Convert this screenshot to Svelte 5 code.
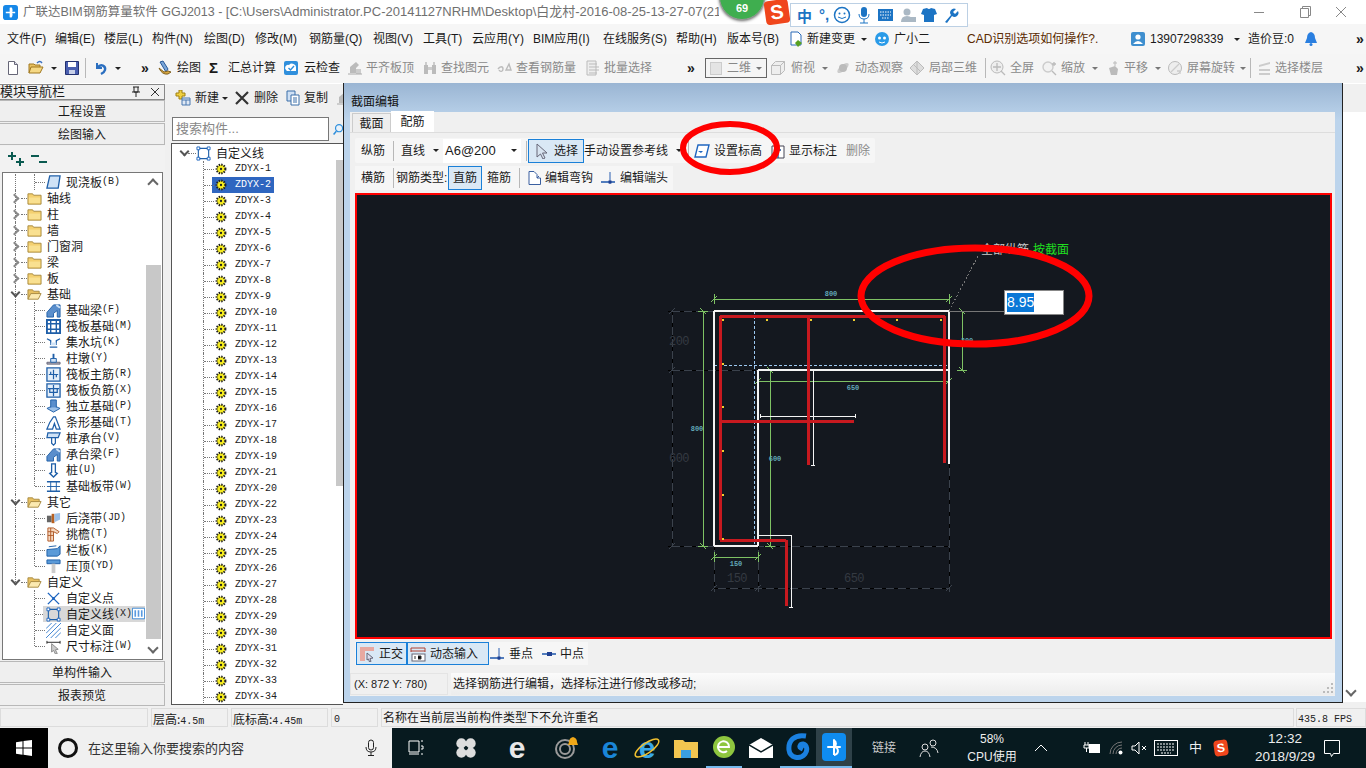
<script>
  const icons = {
    page: '<path d="M3.5 1.5h6l3 3v10h-9z" fill="#fff" stroke="#667"/><path d="M9.5 1.5v3h3" fill="#dde" stroke="#667"/>',
    open: '<path d="M1 13V4h5l1 1h5v2" fill="#e8c060" stroke="#a07820"/><path d="M1 13l2-6h12l-3 6z" fill="#f5d884" stroke="#a07820"/><path d="M9 3q3-3 5 0" fill="none" stroke="#3a70c0" stroke-width="1.4"/>',
    save: '<path d="M1.5 1.5h13v13h-13z" fill="#4a5fb0" stroke="#223070"/><path d="M4 2h8v5H4z" fill="#fff"/><path d="M5 10h6v4H5z" fill="#c8d0e8"/>',
    undo: '<path d="M4 3v5h5" fill="none" stroke="#2b6fc0" stroke-width="2"/><path d="M4.5 7.5C8 3 13 6 12 10c-.5 2-2 3-4 4" fill="none" stroke="#2b6fc0" stroke-width="2.4"/>',
    draw: '<path d="M3 2l3-1 5 8-2 3z" fill="#7aa6d8" stroke="#2a5a98"/><path d="M2 8q3 7 9 6l3-2-3-1-4 1z" fill="#d8a840" stroke="#806020"/>',
    cloud: '<rect x="1" y="1" width="14" height="14" rx="2" fill="#2f8fdc"/><path d="M3 10a3 3 0 0 1 3-5 4 4 0 0 1 7 3v3H4z" fill="#fff"/><path d="M5.500 8l2 2 3.500-4" fill="none" stroke="#2f8fdc" stroke-width="1.4"/>',
    flat: '<path d="M3 13V7l6-5 3 3-3 3v5z" fill="#bbb"/><path d="M9 9h5v5H9z" fill="#ccc"/><path d="M1 14h14" stroke="#aaa"/>',
    binoc: '<path d="M2 5h4v9H2zM10 5h4v9h-4z" fill="#bbb"/><path d="M6 7h4v3H6zM3 2h2v3H3zM11 2h2v3h-2z" fill="#ccc"/>',
    rebar: '<path d="M1 9c2-3 5-3 5 0s-3 3-4 1M9 10l3-6 2 6z" fill="none" stroke="#bbb" stroke-width="1.4"/>',
    batch: '<path d="M2 1h9v14H2z" fill="#eee" stroke="#bbb"/><path d="M4 4h8M4 7h10M4 10h10M4 13h8" stroke="#bbb"/>',
    cube: '<path d="M1.500 5.500h9v9h-9zM1.500 5.500l4-4h9v9l-4 4M10.500 5.500l4-4" fill="#eee" stroke="#bbb"/>',
    orbit: '<ellipse cx="8" cy="8" rx="7" ry="3" transform="rotate(-40 8 8)" fill="#ccc"/><circle cx="8" cy="8" r="4" fill="#bbb"/>',
    local: '<path d="M8 1l7 7-7 7-7-7z" fill="#ddd" stroke="#bbb"/><path d="M4 4l8 8M8 1v14" stroke="#bbb"/>',
    full: '<circle cx="7" cy="7" r="6" fill="#eee" stroke="#bbb"/><path d="M7 3v8M3 7h8M11 11l4 4" stroke="#bbb" stroke-width="1.300"/>',
    zoom: '<circle cx="6" cy="7" r="5" fill="#f2f2f2" stroke="#ccc" stroke-width="1.400"/><path d="M10 11l4 4M12 2v4M10 4h4" stroke="#bbb" stroke-width="1.300"/>',
    pan: '<path d="M4 8l6-2 3 3-1 6H6z" fill="#bbb"/><path d="M10 1v5M8 3h4" stroke="#bbb"/>',
    rotate: '<circle cx="8" cy="8" r="6.500" fill="#eee" stroke="#bbb"/><path d="M4 12l8-8M10 11h3v3" stroke="#ccc" stroke-width="1.300" fill="none"/>',
    floors: '<path d="M2 5l11-3v2L2 7zM2 9h11v2H2zM2 13h11v2H2z" fill="#ccc"/>',
    change: '<path d="M3 1h7l3 3v10H3z" fill="#fff" stroke="#2a6ab8"/><path d="M10 9l4 3-4 4-3-4z" fill="#58a020"/>',
    xiao: '<ellipse cx="8" cy="8" rx="7" ry="7" fill="#2a9be8"/><circle cx="5.500" cy="7" r="1.500" fill="#fff"/><circle cx="10.500" cy="7" r="1.500" fill="#fff"/><path d="M5 11q3 2 6 0" stroke="#fff" fill="none"/>',
    user: '<rect x="1" y="1" width="14" height="14" rx="2" fill="#3f8fcf"/><circle cx="8" cy="6" r="2.600" fill="#fff"/><path d="M3 13q5-6 10 0z" fill="#fff"/>',
    bell: '<path d="M8 1q-4 1-4 6l-2 5h12l-2-5q0-5-4-6z" fill="#2a7fe0"/><circle cx="8" cy="13.500" r="1.500" fill="#2a7fe0"/>',
    plus: '<path d="M8 2h3v3h3v3h-3v3H8V8H5V5h3z" fill="#f0d040" stroke="#a08010" transform="translate(-4 -2)"/><path d="M7 8h8v7H7z" fill="#dfe8f4" stroke="#4a78b0"/><path d="M7 10h8M11 10v5" stroke="#4a78b0"/>',
    xmark: '<path d="M2 2l12 12M14 2L2 14" stroke="#333" stroke-width="2.200"/>',
    copy: '<path d="M2 1h8v10H2z" fill="#cfe0f4" stroke="#3a6ea8"/><path d="M6 5h8v10H6z" fill="#fff" stroke="#3a6ea8"/><path d="M8 8h4M8 10h4M8 12h4" stroke="#3a6ea8"/>',
    cursor: '<path d="M3 1l10 9H8.500l2.500 5-2 1-2.500-5L3 14z" fill="#d8e4f0" stroke="#667"/>',
    elev: '<path d="M4 2h11l-3 12H1z" fill="#fff" stroke="#1f66c0" stroke-width="1.400"/><path d="M4 8h5l-2 2z" fill="#1f66c0"/>',
    show: '<path d="M2 3h12v12H2z" fill="#fff" stroke="#445"/><path d="M8 1v14M5 7h6" stroke="#1f4f98" stroke-width="1.400"/>',
    hook: '<path d="M3 1.500h5l3 3V8h3.500v6.500H3z" fill="#fff" stroke="#3a5fa0"/><path d="M11 8l2-2" stroke="#3a5fa0"/>',
    end: '<path d="M1 12h14" stroke="#2a5fb0" stroke-width="1.600"/><path d="M10 2v12" stroke="#2a5fb0"/><rect x="8.500" y="10.500" width="3" height="3" fill="#1f3f90"/>',
    mid: '<path d="M1 8h14" stroke="#2a5fb0" stroke-width="1.600"/><rect x="6" y="6" width="5" height="4" fill="#1f3f90"/>',
    ortho: '<path d="M1 1h14v4H6v10H1z" fill="#e8a8a0"/><path d="M8 7l6 5-3 .5 1 3-1.500.5-1-3L8 14z" fill="#dde" stroke="#667"/>',
    dyn: '<path d="M1 2h14M1 5h14M1 2v4M15 2v4" stroke="#b04030"/><rect x="2" y="8" width="13" height="7" fill="#fff" stroke="#667"/><path d="M5 10v3M8 10h3v3H8" stroke="#333"/>',
    folder: '<path d="M1 3h5l1 1.500h8V14H1z" fill="#f4d070" stroke="#a88a40"/><path d="M2 7h12v6H2z" fill="#f9e090"/>',
    folderOpen: '<path d="M1 13V3h5l1 1.500h6V7" fill="#e8c060" stroke="#a88a40"/><path d="M1 13l3-6h11l-3 6z" fill="#fbe9b0" stroke="#a88a40"/>',
    slab: '<path d="M4 1h11l-2 13H1z" fill="#cfe2f6" stroke="#1f5fa8" stroke-width="1.400"/>',
    beam: '<path d="M1 15V10l7-8h7v13h-3V8L8 11v4z" fill="#5a8ecc" stroke="#1f5fa8"/><path d="M11 2l4 3" stroke="#cfe2f6" stroke-width="2"/>',
    raft: '<path d="M1 1h14v14H1z" fill="#fff" stroke="#1f5fa8" stroke-width="2"/><path d="M5 1v14M11 1v14M1 5h14M1 11h14" stroke="#1f5fa8" stroke-width="1.500"/>',
    pit: '<path d="M1 4l4 2v4h6V6l4-2M4 13h8" fill="none" stroke="#1f5fa8" stroke-width="1.400"/><path d="M5 8h6v3H5z" fill="#cfe2f6"/>',
    pier: '<path d="M1 12h14v2H1z" fill="#aab" stroke="#667"/><path d="M5 8h6v4H5z" fill="#cfe2f6" stroke="#1f5fa8"/><path d="M7 3h2v5H7z" fill="#1f5fa8"/>',
    rmain: '<path d="M1 1h14v14H1z" fill="#e4effa" stroke="#1f5fa8" stroke-width="1.400"/><path d="M8 3v10M3 8h10M5 5v3M11 8v3" stroke="#1f5fa8" stroke-width="1.300"/>',
    rneg: '<path d="M1 1h14v14H1z" fill="#e4effa" stroke="#1f5fa8" stroke-width="1.400"/><path d="M8 2v12M2 6h12M4 6v4h8V6" fill="none" stroke="#1f5fa8" stroke-width="1.300"/>',
    iso: '<path d="M1 10l7-3 7 3-7 4z" fill="#9cc0e8" stroke="#1f5fa8"/><path d="M5 9V1h6v8" fill="#5a8ecc" stroke="#1f5fa8"/>',
    strip: '<path d="M1 15l3-7 4-6h2l5 13h-4l-2-6-2 6z" fill="#fff" stroke="#1f5fa8" stroke-width="1.300"/>',
    cap: '<path d="M2 2h13l-2 5H1z" fill="#cfe2f6" stroke="#1f5fa8" stroke-width="1.300"/><path d="M6 7h4v6l-2 2-2-2z" fill="#fff" stroke="#1f5fa8" stroke-width="1.300"/>',
    pile: '<path d="M6 1h4v9l2 1-4 4-4-4 2-1z" fill="#fff" stroke="#1f5fa8" stroke-width="1.400"/>',
    band: '<path d="M1 3h14M1 13h14" stroke="#1f5fa8" stroke-width="1.600"/><path d="M5 3v10M11 3v10M1 8h14" stroke="#1f5fa8"/>',
    post: '<path d="M1 5h5v7H1z" fill="#666"/><path d="M6 3h3v10H6z" fill="#b86020"/><path d="M9 3l6-1v7l-6 3z" fill="#9cc0e8"/>',
    eave: '<path d="M2 1h6l6 4-2 2-4-2v10H2z" fill="#f6d8c0" stroke="#b05a28"/><path d="M2 5h6M2 9h6M5 1v14" stroke="#b05a28"/>',
    rail: '<path d="M1 7l11-1 3-3v9l-3 2H1z" fill="#5a9ad8" stroke="#1f5fa8"/><path d="M3 4l8-1" stroke="#1f5fa8"/>',
    top: '<path d="M1 1h14v4H1z" fill="#5a9ad8" stroke="#1f5fa8"/><path d="M6 5h4v10H6z" fill="#ccc"/>',
    point: '<path d="M2 2l12 12M14 2L2 14" stroke="#1f66c0" stroke-width="1.500"/><circle cx="8" cy="8" r="1.500" fill="#1f66c0"/>',
    line: '<path d="M2.500 2.500h11v11h-11z" fill="none" stroke="#1f5fa8" stroke-width="1.200"/><path d="M1 1h3v3H1zM12 1h3v3h-3zM1 12h3v3H1zM12 12h3v3h-3z" fill="#fff" stroke="#1f66c0"/>',
    hatch: '<path d="M0 6l6-6M0 11L11 0M0 16L16 0M5 16L16 5M10 16l6-6" stroke="#3a80d0"/>',
    dim: '<path d="M1 2v3M15 2v3M1 3.500h14" stroke="#222"/><path d="M6 5l7 6-3 .5 2 4-2 .5-2-4-2 2z" fill="#ccc" stroke="#888"/>',
    cols: '<path d="M.5 1.500h15v13H.5z" fill="#fff" stroke="#1f78d0"/><path d="M3 4h2v8H3zM7 4h2v8H7zM11 4h2v8h-2z" fill="#5a9ae0"/>',
    gear: '<circle cx="8" cy="8" r="5" fill="#f8ee20" stroke="#222" stroke-width="2.400" stroke-dasharray="1.600 1.300"/><circle cx="8" cy="8" r="1.300" fill="#222"/>'
  };

  const place = (items) =>
    items.map((it, i) => ({ ...it, w: items[i + 1] ? items[i + 1].x - it.x : null }));

  const menus = place([
    { x: 7, t: "文件(F)" }, { x: 55, t: "编辑(E)" }, { x: 104, t: "楼层(L)" }, { x: 152, t: "构件(N)" },
    { x: 204, t: "绘图(D)" }, { x: 255, t: "修改(M)" }, { x: 309, t: "钢筋量(Q)" }, { x: 373, t: "视图(V)" },
    { x: 423, t: "工具(T)" }, { x: 472, t: "云应用(Y)" }, { x: 533, t: "BIM应用(I)" }, { x: 603, t: "在线服务(S)" },
    { x: 676, t: "帮助(H)" }, { x: 727, t: "版本号(B)" }, { x: 788, ic: "change" }, { x: 807, t: "新建变更" },
    { x: 861, a: 1 }, { x: 874, ic: "xiao" }, { x: 894, t: "广小二" }, { x: 967, t: "CAD识别选项如何操作?.", brown: 1 },
    { x: 1130, ic: "user" }, { x: 1150, t: "13907298339" }, { x: 1234, a: 1 }, { x: 1248, t: "造价豆:0" },
    { x: 1303, ic: "bell" }, { x: 1356, t: "»" }
  ]);

  const tools = place([
    { x: 5, ic: "page" }, { x: 28, ic: "open" }, { x: 51, a: 1 }, { x: 64, ic: "save" }, { x: 85, s: 1 },
    { x: 93, ic: "undo" }, { x: 115, a: 1 }, { x: 141, t: "»" }, { x: 157, ic: "draw" }, { x: 177, t: "绘图" },
    { x: 209, t: "Σ", b: 1 }, { x: 228, t: "汇总计算" }, { x: 283, ic: "cloud" }, { x: 304, t: "云检查" },
    { x: 347, ic: "flat" }, { x: 366, t: "平齐板顶", g: 1 }, { x: 422, ic: "binoc" }, { x: 441, t: "查找图元", g: 1 },
    { x: 497, ic: "rebar" }, { x: 516, t: "查看钢筋量", g: 1 }, { x: 585, ic: "batch" }, { x: 604, t: "批量选择", g: 1 },
    { x: 687, t: "»" }, { x: 705, combo: 1 }, { x: 770, ic: "cube" }, { x: 791, t: "俯视", g: 1 }, { x: 822, a: 1, ga: 1 },
    { x: 835, ic: "orbit" }, { x: 855, t: "动态观察", g: 1 }, { x: 909, ic: "local" }, { x: 929, t: "局部三维", g: 1 },
    { x: 985, s: 1 }, { x: 990, ic: "full" }, { x: 1010, t: "全屏", g: 1 }, { x: 1042, ic: "zoom" }, { x: 1061, t: "缩放", g: 1 },
    { x: 1092, a: 1, ga: 1 }, { x: 1105, ic: "pan" }, { x: 1124, t: "平移", g: 1 }, { x: 1155, a: 1, ga: 1 },
    { x: 1167, ic: "rotate" }, { x: 1187, t: "屏幕旋转", g: 1 }, { x: 1240, a: 1, ga: 1 }, { x: 1250, s: 1 },
    { x: 1257, ic: "floors" }, { x: 1275, t: "选择楼层", g: 1 }, { x: 1356, t: "»" }
  ]);

  const midTools = place([
    { x: 175, ic: "plus" }, { x: 195, t: "新建" }, { x: 222, a: 1 }, { x: 234, ic: "xmark" }, { x: 254, t: "删除" },
    { x: 285, ic: "copy" }, { x: 304, t: "复制" }, { x: 336, ic: "flat" }
  ]);

  const row1 = place([
    { x: 361, t: "纵筋" }, { x: 393, s: 1 }, { x: 401, t: "直线" }, { x: 433, a: 1 }, { x: 443, select: 1 },
    { x: 526, s: 1 }, { x: 528, ic: "cursor", t: "选择", on: 1 }, { x: 584, t: "手动设置参考线" }, { x: 676, a: 1 },
    { x: 688, s: 1 }, { x: 694, ic: "elev" }, { x: 714, t: "设置标高" }, { x: 770, ic: "show" }, { x: 789, t: "显示标注" },
    { x: 846, t: "删除", g: 1 }
  ]);

  const row2 = place([
    { x: 361, t: "横筋" }, { x: 393, s: 1 }, { x: 396, t: "钢筋类型:" }, { x: 448, t: "直筋", on: 1 }, { x: 487, t: "箍筋" },
    { x: 519, s: 1 }, { x: 526, ic: "hook" }, { x: 545, t: "编辑弯钩" }, { x: 600, ic: "end" }, { x: 620, t: "编辑端头" }
  ]);

  const row3 = place([
    { x: 356, ic: "ortho", t: "正交", on: 1 }, { x: 407, ic: "dyn", t: "动态输入", on: 1 }, { x: 489, ic: "end" }, { x: 509, t: "垂点" },
    { x: 541, ic: "mid" }, { x: 560, t: "中点" }
  ]);

  const modules = [
    { n: "现浇板", k: "(B)", ic: "slab", lv: 1 },
    { n: "轴线", ic: "folder", arrow: "r" }, { n: "柱", ic: "folder", arrow: "r" }, { n: "墙", ic: "folder", arrow: "r" },
    { n: "门窗洞", ic: "folder", arrow: "r" }, { n: "梁", ic: "folder", arrow: "r" }, { n: "板", ic: "folder", arrow: "r" },
    { n: "基础", ic: "folderOpen", arrow: "d" },
    { n: "基础梁", k: "(F)", ic: "beam", lv: 1 }, { n: "筏板基础", k: "(M)", ic: "raft", lv: 1 }, { n: "集水坑", k: "(K)", ic: "pit", lv: 1 },
    { n: "柱墩", k: "(Y)", ic: "pier", lv: 1 }, { n: "筏板主筋", k: "(R)", ic: "rmain", lv: 1 }, { n: "筏板负筋", k: "(X)", ic: "rneg", lv: 1 },
    { n: "独立基础", k: "(P)", ic: "iso", lv: 1 }, { n: "条形基础", k: "(T)", ic: "strip", lv: 1 }, { n: "桩承台", k: "(V)", ic: "cap", lv: 1 },
    { n: "承台梁", k: "(F)", ic: "beam", lv: 1 }, { n: "桩", k: "(U)", ic: "pile", lv: 1 }, { n: "基础板带", k: "(W)", ic: "band", lv: 1, last: 1 },
    { n: "其它", ic: "folderOpen", arrow: "d" },
    { n: "后浇带", k: "(JD)", ic: "post", lv: 1 }, { n: "挑檐", k: "(T)", ic: "eave", lv: 1 }, { n: "栏板", k: "(K)", ic: "rail", lv: 1 },
    { n: "压顶", k: "(YD)", ic: "top", lv: 1, last: 1 },
    { n: "自定义", ic: "folderOpen", arrow: "d", end: 1 },
    { n: "自定义点", ic: "point", lv: 1, nov: 1 }, { n: "自定义线", k: "(X)", ic: "line", lv: 1, nov: 1, on: 1 }, { n: "自定义面", ic: "hatch", lv: 1, nov: 1 },
    { n: "尺寸标注", k: "(W)", ic: "dim", lv: 1, nov: 1, last: 1 }
  ];

  const order = [1,2,3,4,5,6,7,8,9,10,11,12,13,14,15,16,17,18,19,21,20,22,23,24,25,26,27,28,29,30,31,32,33,34];

  const white = [[714,311,949,311,2],[714,311,714,546,2],[714,546,758,546,2],[758,370,758,546,2],[758,370,949,370,2],[949,311,949,464,2],
    [813,370,813,465,1],[760,416,855,416,1],[758,535,791,535,1],[791,535,791,607,1],[811,465,815,465,1],[789,607,793,607,1],[760,414,760,418,1],[855,414,855,418,1]];
  const red = [[720,316,945,316],[720,316,720,540],[808,316,808,465],[944,316,944,463],[720,421,854,421],[720,540,786,540],[786,540,786,606]];
  const tick = (x, y) => [x - 3, y + 3, x + 3, y - 3];
  const green = [[714,299,949,299],[962,311,962,370],[758,381,949,381],[703,311,703,546],[770,370,770,546],[714,557,758,557],
    [714,294,714,304],[949,294,949,304],[758,376,758,386],[949,376,949,386],[957,311,967,311],[957,370,967,370],[698,311,708,311],[698,546,708,546],[765,370,775,370],[765,546,775,546],[714,552,714,562],[758,552,758,562],
    tick(714,299),tick(949,299),tick(758,381),tick(949,381),tick(714,557),tick(758,557),[959,308,965,314],[959,367,965,373],[700,308,706,314],[700,543,706,549],[767,367,773,373],[767,543,773,549]];
  const grey = [[672,311,672,546],[668,311,714,311],[668,370,758,370],[668,546,949,546],[714,546,714,592],[758,546,758,592],[949,464,949,592],[714,588,949,588]];
  const greyTicks = [tick(672,311),tick(672,370),tick(672,546),tick(714,588),tick(758,588),tick(949,588)];
  const dots = [[722,319],[766,319],[810,319],[853,319],[896,319],[940,319],[722,363],[722,406],[722,450],[722,494],[722,538]];
  const big = [["200",679,345],["600",679,462],["150",737,582],["650",854,582]];
  const small = [["800",831,296],["650",853,390],["800",697,431],["600",775,461],["150",736,566],["200",967,343]];
</script>

{#snippet ic(name, size = 16)}
  <svg class="ic" width={size} height={size} viewBox="0 0 16 16">{@html icons[name]}</svg>
{/snippet}

{#snippet items(list)}
  {#each list as it}
    <div class="it" class:gray={it.g} class:brown={it.brown} class:bold={it.b} class:dbl={it.t === "»"} class:on={it.on} style:width={it.w ? it.w + "px" : null}>
      {#if it.s}<span class="sep"></span>{/if}
      {#if it.a}<span class="caret" class:dim={it.ga}></span>{/if}
      {#if it.combo}<span class="combo"><i></i><em>二维</em><span class="caret dim"></span></span>{/if}
      {#if it.select}<span class="select">A6@200<span class="caret"></span></span>{/if}
      {#if it.ic}{@render ic(it.ic)}{/if}
      {#if it.t}<span class="lb">{it.t}</span>{/if}
    </div>
  {/each}
{/snippet}

<div class="app">
  <header class="title">
    <svg class="logo" width="15" height="15" viewBox="0 0 16 16"><rect width="16" height="16" rx="3" fill="#1688e8"/><path d="M8 3v10M3 8h10M8 8a3 3 0 0 0 0-5M8 8a3 3 0 0 1 0 5" fill="none" stroke="#fff" stroke-width="1.800"/></svg>
    <span class="ttl">广联达BIM钢筋算量软件 GGJ2013 - <span class="path">[C:\Users\Administrator.PC-20141127NRHM\Desktop\白龙村-2016-08-25-13-27-07(2163版).GGJ12]</span></span>
    <div class="winbtns">
      <svg width="92" height="14" viewBox="0 0 92 14"><path d="M0 7.500h10" stroke="#888"/><path d="M46.500 3.500h8v9h-8zM48.500 3.500v-2h8v9h-2" fill="none" stroke="#888"/><path d="M92 2L82 12M82 2l10 10" stroke="#888"/></svg>
    </div>
  </header>

  <nav class="menu bar">{@render items(menus)}</nav>
  <div class="tools bar">{@render items(tools)}</div>

  <main class="main">
    <aside class="left">
      <div class="phead"><span>模块导航栏</span>
        <svg width="30" height="12" viewBox="0 0 30 12"><path d="M2 1h6M3 1v5h4V1M1 6h8M5 6v5" fill="none" stroke="#222"/><path d="M20 2l8 8M28 2l-8 8" stroke="#333"/></svg>
      </div>
      <div class="nbtn">工程设置</div>
      <div class="nbtn">绘图输入</div>
      <div class="expand">
        <svg width="46" height="18" viewBox="0 0 46 18"><path d="M3 5h8M7 1v8M11 11h8M15 7v8" stroke="#0a5a50" stroke-width="2"/><path d="M26 5h8M34 11h8" stroke="#0a5a50" stroke-width="2"/></svg>
      </div>
      <div class="tree mod">
        <div class="scroll"><b class="chev top"></b><i class="thumb"></i><b class="chev"></b></div>
        {#each modules as m}
          <div class="row" class:lv={m.lv}>
            {#if !m.end && !m.nov}<i class="v0"></i>{/if}
            {#if m.end}<i class="v0 half"></i>{/if}
            {#if m.lv}<i class="v1" class:half={m.last}></i><i class="h1"></i>{:else}<i class="h0"></i>{/if}
            {#if m.arrow}<b class="tw {m.arrow}"></b>{/if}
            <span class="cell" class:sel={m.on}>
              {@render ic(m.ic, 15)}
              <span class="cn">{m.n}</span>{#if m.k}<span class="mono">{m.k}</span>{/if}
              {#if m.on}<svg class="cols" width="13" height="15" viewBox="0 0 16 16">{@html icons.cols}</svg>{/if}
            </span>
          </div>
        {/each}
      </div>
      <div class="nbtn foot">单构件输入</div>
      <div class="nbtn">报表预览</div>
    </aside>

    <section class="mid">
      <div class="midbar">{@render items(midTools)}</div>
      <div class="srow">
        <div class="search">搜索构件...</div>
        <svg width="14" height="16" viewBox="0 0 14 16"><circle cx="9" cy="7" r="4.500" fill="#e8f2fb" stroke="#2f8fdc" stroke-width="1.500"/><path d="M5.500 11L2 15" stroke="#2f8fdc" stroke-width="2"/></svg>
      </div>
      <div class="tree comp">
        <div class="mscroll"><i></i></div>
        <div class="row root"><b class="tw d"></b><i class="h0"></i>{@render ic("line", 15)}<span class="cn">自定义线</span></div>
        {#each order as n}
          <div class="row child" class:cur={n === 2}><i class="v1"></i><i class="h1"></i>{@render ic("gear", 14)}<span class="mono">ZDYX-{n}</span></div>
        {/each}
      </div>
    </section>

    <section class="dialog">
      <div class="dtitle">截面编辑</div>
      <div class="dbody">
        <div class="tabs"><span class="tab">截面</span><span class="tab act">配筋</span></div>
        <div class="drow r1 bar">{@render items(row1)}</div>
        <div class="drow r2 bar">{@render items(row2)}</div>
        <div class="canvas">
          <svg width="973" height="442" viewBox="357 195 973 442" shape-rendering="crispEdges">
            {#each grey as l}<line x1={l[0]} y1={l[1]} x2={l[2]} y2={l[3]} stroke="#3b424c"/><line x1={l[0]} y1={l[1]} x2={l[2]} y2={l[3]} stroke="#000" stroke-dasharray="4 8"/>{/each}
            {#each greyTicks as l}<line x1={l[0]} y1={l[1]} x2={l[2]} y2={l[3]} stroke="#3b424c"/>{/each}
            {#each big as b}<text x={b[1]} y={b[2]} class="bigt" text-anchor="middle">{b[0]}</text>{/each}
            <line x1="754" y1="311" x2="754" y2="546" stroke="#9cc8f0" stroke-dasharray="3 2"/>
            <line x1="714" y1="365" x2="949" y2="365" stroke="#9cc8f0" stroke-dasharray="3 2"/>
            {#each green as l}<line x1={l[0]} y1={l[1]} x2={l[2]} y2={l[3]} stroke="#7ec264"/>{/each}
            {#each white as l}<line x1={l[0]} y1={l[1]} x2={l[2]} y2={l[3]} stroke="#f4f4f4" stroke-width={l[4]}/>{/each}
            {#each red as l}<line x1={l[0]} y1={l[1]} x2={l[2]} y2={l[3]} stroke="#c8191f" stroke-width="3"/>{/each}
            {#each dots as d}<rect x={d[0]} y={d[1]} width="2" height="2" fill="#f0d030"/>{/each}
            {#each small as s}<text x={s[1]} y={s[2]} class="smt" text-anchor="middle">{s[0]}</text>{/each}
            <path d="M949 311L979 254" stroke="#777" stroke-dasharray="2 2" fill="none"/>
            <line x1="949" y1="311" x2="1004" y2="311" stroke="#777"/>
            <text x="981" y="254" class="note" fill="#ccc">全部纵筋</text>
            <text x="1033" y="254" class="note" fill="#20e020">按截面</text>
          </svg>
          <div class="input"><span>8.95</span></div>
        </div>
        <div class="drow r3 bar">{@render items(row3)}</div>
        <div class="dstat">
          <span class="xy">(X: 872 Y: 780)</span>
          <span class="hint">选择钢筋进行编辑，选择标注进行修改或移动;
            <svg class="grip" width="10" height="10" viewBox="0 0 10 10"><path d="M8 0h2v2H8zM4 4h2v2H4zM8 4h2v2H8zM0 8h2v2H0zM4 8h2v2H4zM8 8h2v2H8z" fill="#bbb"/></svg>
          </span>
        </div>
      </div>
    </section>

    <aside class="far"><b class="chev"></b></aside>
  </main>

  <footer class="status">
    <span class="c a"></span>
    <span class="c b"><span class="cn">层高:</span><span class="mono">4.5m</span></span>
    <span class="c d"><span class="cn">底标高:</span><span class="mono">4.45m</span></span>
    <span class="c e"><span class="mono">0</span></span>
    <span class="c f">名称在当前层当前构件类型下不允许重名</span>
    <span class="c g"><span class="mono">435.8 FPS</span></span>
  </footer>

  <div class="taskbar">
    <div class="start"><svg width="16" height="16" viewBox="0 0 16 16"><path d="M0 2.200l6.500-1v6.300H0zM7.500 1L16 0v7.500H7.500zM0 8.500h6.500v6.300l-6.500-1zM7.500 8.500H16V16l-8.500-1.200z" fill="#fff"/></svg></div>
    <div class="tsearch">
      <span class="ring"></span><span class="ph">在这里输入你要搜索的内容</span>
      <svg width="12" height="18" viewBox="0 0 12 18"><rect x="3.500" y="1" width="5" height="10" rx="2.500" fill="none" stroke="#222"/><path d="M1 8q0 5 5 5t5-5M6 13v3M3 16.500h6" fill="none" stroke="#222"/></svg>
    </div>
    <div class="tasks">
      <span class="tk" style:width="48px"><svg width="16" height="16" viewBox="0 0 16 16"><path d="M1 1h10v11H1zM13 1h2M13 6h2v3h-2M13 14h2M1 14h10" fill="none" stroke="#fff"/></svg></span>
      <span class="tk" style:width="52px"><svg width="24" height="24" viewBox="0 0 26 26"><circle cx="8" cy="8" r="5.500" fill="#ddd"/><circle cx="18" cy="8" r="5.500" fill="#ddd"/><circle cx="8" cy="18" r="5.500" fill="#ddd"/><circle cx="18" cy="18" r="5.500" fill="#ddd"/><circle cx="13" cy="13" r="2" fill="#061a1f"/></svg></span>
      <span class="tk" style:width="50px"><span class="ee" style:color="#e8e8e8">e</span></span>
      <span class="tk" style:width="50px"><svg width="28" height="28" viewBox="0 0 28 28"><circle cx="12" cy="15" r="9" fill="none" stroke="#9a9a9a" stroke-width="2"/><circle cx="12" cy="15" r="5" fill="none" stroke="#9a9a9a" stroke-width="2"/><path d="M20 3q-4 1-4 5l-1 3h10l-1-3q0-4-4-5z" fill="#f0a818"/></svg></span>
      <span class="tk" style:width="36px"><span class="ee" style:color="#1a86d8">e</span></span>
      <span class="tk ie" style:width="38px"><span class="ee" style:color="#39a8e8">e</span><svg width="30" height="30" viewBox="0 0 30 30"><ellipse cx="15" cy="15" rx="14" ry="5" transform="rotate(-35 15 15)" fill="none" stroke="#f0c030" stroke-width="1.500"/></svg></span>
      <span class="tk" style:width="40px"><svg width="26" height="22" viewBox="0 0 26 22"><path d="M1 3h9l2 2h13v16H1z" fill="#f2c650"/><path d="M8 13h10v8H8z" fill="#3a9fe0"/></svg></span>
      <span class="tk under" style:width="36px"><svg width="24" height="26" viewBox="0 0 24 26"><circle cx="12" cy="13" r="11" fill="#8ec63f"/><path d="M6 13h11a5.500 5.500 0 1 0-2 4" fill="none" stroke="#fff" stroke-width="2"/></svg></span>
      <span class="tk" style:width="38px"><svg width="24" height="20" viewBox="0 0 24 20"><path d="M0 7L12 0l12 7v13H0z" fill="#fff"/><path d="M0 7l12 7 12-7" fill="none" stroke="#061a1f" stroke-width="1.500"/></svg></span>
      <span class="tk under" style:width="36px"><svg width="24" height="28" viewBox="0 0 24 28"><path d="M20 3C8 1 2 8 3 17c1 8 11 10 16 4 3-4 2-9-2-10-3 0-4 3-2 4l2 1" fill="none" stroke="#1a80e0" stroke-width="5"/></svg></span>
      <span class="tk under active" style:width="36px"><span class="tile"><svg width="18" height="18" viewBox="0 0 16 16"><path d="M8 1v14M2 8h12M8 8a3.500 3.500 0 0 0 0-6M8 8a3.500 3.500 0 0 1 0 7" fill="none" stroke="#fff" stroke-width="1.800"/></svg></span></span>
      <span class="tl link">链接</span>
      <svg class="ppl" width="22" height="20" viewBox="0 0 22 20"><circle cx="7" cy="9" r="3" fill="none" stroke="#ddd"/><path d="M2 19q1-6 5-6t5 6" fill="none" stroke="#ddd"/><circle cx="15" cy="5" r="3" fill="none" stroke="#ddd"/><path d="M13 9q6 0 7 6" fill="none" stroke="#ddd"/></svg>
    </div>
    <div class="cpu"><span>58%</span><span>CPU使用</span></div>
    <svg class="up" width="14" height="8" viewBox="0 0 14 8"><path d="M1 7l6-6 6 6" fill="none" stroke="#fff"/></svg>
    <div class="tray">
      <svg width="18" height="14" viewBox="0 0 18 14"><path d="M2 1v3M5 1v3M1 4h5v3H1zM3.500 7v4" stroke="#fff" fill="none"/><rect x="6" y="3" width="11" height="9" fill="#fff"/></svg>
      <svg width="16" height="16" viewBox="0 0 16 16"><path d="M2 14a12 12 0 0 1 12-12M5 14a9 9 0 0 1 9-9M8 14a6 6 0 0 1 6-6" fill="none" stroke="#777"/><circle cx="12.500" cy="12.500" r="2" fill="#fff"/></svg>
      <svg width="16" height="14" viewBox="0 0 16 14"><path d="M1 5h3l4-4v12L4 9H1z" fill="none" stroke="#fff"/><path d="M11 5l4 4M15 5l-4 4" stroke="#fff"/></svg>
      <svg width="24" height="16" viewBox="0 0 24 16"><rect x=".5" y=".5" width="23" height="15" fill="none" stroke="#fff"/><path d="M3 4h18M3 7h18M3 10h18M7 13h10" stroke="#fff" stroke-dasharray="2 1"/></svg>
      <span class="tz">中</span>
      <span class="sg small">S</span>
    </div>
    <div class="clock"><span>12:32</span><span>2018/9/29</span></div>
    <svg class="notif" width="16" height="17" viewBox="0 0 16 17"><path d="M.5.500h15v13h-6l-2 3-1-3h-6z" fill="none" stroke="#fff"/></svg>
  </div>

  <!-- things lying over the window: the input ball, the sogou bar, the hand drawn rings -->
  <div class="ball"><span>69</span></div>
  <div class="sogou">
    <span class="sg">S</span>
    <div class="sgbar">
      <span class="zh">中</span><span class="pt">°,</span>
      <svg width="128" height="18" viewBox="0 0 128 18">
        <circle cx="9" cy="9" r="7.500" fill="none" stroke="#1c74c4" stroke-width="1.500"/><circle cx="6.500" cy="7.500" r="1" fill="#1c74c4"/><circle cx="11.500" cy="7.500" r="1" fill="#1c74c4"/><path d="M5 11q4 3 8 0" fill="none" stroke="#1c74c4"/>
        <rect x="28" y="1" width="6" height="10" rx="3" fill="#1c74c4"/><path d="M26 8q0 5 5 5t5-5M31 13v4M27 17h8" fill="none" stroke="#1c74c4"/>
        <rect x="45" y="3" width="15" height="12" fill="#1c74c4"/><path d="M47 6h11M47 9h11M49 12h7" stroke="#fff" stroke-dasharray="1.500 1"/>
        <circle cx="74" cy="6" r="3.500" fill="#aab8c4"/><path d="M68 16q0-6 6-6t6 6z" fill="#aab8c4"/><rect x="76" y="11" width="7" height="5" fill="#aab8c4"/>
        <path d="M90 3l4-1q2 2 4 0l4 1 2 5-3 1v7h-10V9l-3-1z" fill="#1c74c4"/>
        <path d="M112 16l6-7a4 4 0 0 1 5-6l-3 3 2 2 3-3a4 4 0 0 1-6 5l-5 7z" fill="#1c74c4"/>
      </svg>
    </div>
  </div>
  <svg class="rings" width="1366" height="768" viewBox="0 0 1366 768">
    <ellipse cx="730" cy="148" rx="47" ry="24" fill="none" stroke="#f00" stroke-width="6"/>
    <ellipse cx="975" cy="296" rx="114" ry="48" fill="none" stroke="#f00" stroke-width="7"/>
  </svg>
</div>

<style>
  :global(body) { margin: 0; background: #f0f0f0; }
  .app {
    position: relative;
    width: 1366px;
    height: 768px;
    overflow: hidden;
    display: flex;
    flex-direction: column;
    font: 12px/16px "Liberation Sans", "Noto Sans CJK SC", sans-serif;
    color: #1a1a1a;
    background: #f0f0f0;
  }
  .cn { font-family: "Noto Sans CJK SC", sans-serif; }
  .mono { font: 10px/16px "Liberation Mono", monospace; color: #222; }
  .ic { display: block; flex: none; }

  .title { height: 24px; background: #fff; display: flex; align-items: center; padding-left: 3px; flex: none; }
  .ttl { margin-left: 5px; color: #707070; white-space: nowrap; width: 696px; overflow: hidden; font-size: 12.5px; }
  .path { font-size: 13px; }
  .winbtns { margin-left: auto; margin-right: 20px; display: flex; }

  .bar { display: flex; align-items: center; }
  .it { display: flex; align-items: center; flex: none; white-space: nowrap; height: 100%; box-sizing: border-box; }
  .gray { color: #8a8a8a; }
  .brown { color: #5a2a00; }
  .bold { font-weight: 700; font-size: 15px; }
  .dbl { font-weight: 700; font-size: 14px; }
  .lb { display: block; }
  .sep { width: 1px; height: 20px; background: #b8b8b8; }
  .caret { width: 0; height: 0; border: 3px solid transparent; border-top: 3px solid #222; border-bottom: 0; display: block; }
  .caret.dim { border-top-color: #777; }
  .menu { height: 30px; flex: none; background: #f6f6f6; padding-left: 7px; }
  .tools { height: 30px; flex: none; background: #f5f5f5; padding: 0 0 1px 5px; border-bottom: 1px solid #fff; box-sizing: border-box; }
  .combo { display: flex; align-items: center; width: 62px; height: 20px; border: 1px solid #666; box-sizing: border-box; padding: 0 4px; gap: 5px; color: #888; }
  .combo i { width: 13px; height: 11px; background: #e4e4e4; border: 1px solid #ccc; }
  .combo em { font-style: normal; width: 24px; }

  .main { flex: 1; display: flex; min-height: 0; height: 624px; }

  .left { width: 165px; margin-right: 6px; flex: none; display: flex; flex-direction: column; background: #f0f0f0; }
  .phead { height: 16px; display: flex; justify-content: space-between; align-items: center; padding-right: 3px; border: 1px solid #888; border-left: 0; box-sizing: border-box; font-size: 13px; }
  .nbtn { height: 22px; line-height: 22px; text-align: center; font-size: 12px; border: 1px solid #b8b8b8; border-left: 0; box-sizing: border-box; background: #efefef; margin-bottom: 1px; }
  .expand { height: 26px; background: #f2f2f2; padding: 5px 0 0 5px; box-sizing: border-box; }
  .tree { position: relative; background: #fff; box-sizing: border-box; overflow: hidden; }
  .tree.mod { height: 488px; margin: 0 2px 1px 2px; border: 1px solid #777; padding-top: 1px; }
  .foot { margin-top: 0; }
  .row { position: relative; height: 16px; display: flex; align-items: center; white-space: nowrap; }
  .row i { position: absolute; display: block; }
  .v0 { left: 12px; top: 0; bottom: 0; border-left: 1px dotted #777; }
  .v1 { left: 31px; top: 0; bottom: 0; border-left: 1px dotted #777; }
  .half { bottom: 8px; }
  .h0 { left: 18px; top: 8px; width: 6px; border-top: 1px dotted #777; }
  .h1 { left: 32px; top: 8px; width: 10px; border-top: 1px dotted #777; }
  .mod .row .cell { display: flex; align-items: center; height: 16px; position: absolute; left: 24px; }
  .mod .row.lv .cell { left: 43px; padding-right: 1px; }
  .cell > .ic { margin-right: 5px; }
  .mod .row.lv .cell.sel { background: #d8d8d8; width: 102px; left: 40px; padding-left: 3px; box-sizing: border-box; }
  .cols { position: absolute; right: 0; top: 0; }
  .tw { position: absolute; left: 8px; top: 5px; width: 5px; height: 5px; border-right: 2px solid #888; border-bottom: 2px solid #888; transform: rotate(-45deg); }
  .tw.d { transform: rotate(45deg); left: 9px; top: 3px; border-color: #555; }
  .scroll { position: absolute; right: 0; top: 0; bottom: 0; width: 16px; background: #fff; display: flex; flex-direction: column; z-index: 1; }
  .scroll .thumb { position: absolute; top: 92px; height: 374px; left: 0; width: 15px; background: #c8c8c8; }
  .chev { display: block; width: 6px; height: 6px; border-right: 2px solid #666; border-bottom: 2px solid #666; transform: rotate(45deg); }
  .scroll .chev { position: absolute; left: 3px; bottom: 7px; }
  .scroll .chev.top { bottom: auto; top: 7px; transform: rotate(225deg); }

  .mid { width: 172px; flex: none; display: flex; flex-direction: column; background: #f0f0f0; }
  .midbar { height: 28px; display: flex; align-items: center; padding-left: 4px; flex: none; overflow: hidden; }
  .srow { display: flex; align-items: center; gap: 3px; margin: 5px 0 2px 1px; flex: none; overflow: hidden; }
  .search { width: 157px; height: 24px; flex: none; border: 1px solid #777; background: #fff; color: #888; padding-left: 3px; line-height: 22px; box-sizing: border-box; font-size: 13px; }
  .tree.comp { height: 562px; border: 1px solid #555; border-right: 0; padding-top: 1px; }
  .root { padding-left: 24px; }
  .root .h0 { left: 16px; width: 8px; }
  .root .ic { margin-right: 5px; }
  .child { padding-left: 42px; }
  .child .ic { margin-right: 7px; position: relative; z-index: 1; }
  .child .mono { position: relative; z-index: 1; }
  .cur::before { content: ""; position: absolute; left: 40px; top: 0; width: 62px; height: 16px; background: #2f66c0; }
  .cur .mono { color: #fff; }
  .mscroll { position: absolute; right: 0; top: 0; bottom: 0; width: 7px; background: #fff; }
  .mscroll i { display: block; position: absolute; top: 16px; left: 0; width: 7px; height: 326px; background: #c8c8c8; }

  .dialog { width: 1000px; flex: none; box-sizing: border-box; height: 620px; margin-top: -1px; background: linear-gradient(#9ab5d3, #bcd4ec 6%); border: 1px solid #222; border-width: 0 1px 1px 1px; padding: 0 6px 6px 6px; }
  .dtitle { height: 29px; line-height: 38px; padding-left: 1px; font-size: 12px; color: #111; }
  .dbody { height: 584px; background: #f0f0f0; padding: 0 0 0 5px; width: 985px; box-sizing: border-box; }
  .tabs { height: 21px; display: flex; margin-left: -5px; align-items: flex-end; background: #f0f0f0; border-bottom: 1px solid #ddd; box-sizing: border-box; }
  .tab { width: 39px; height: 19px; margin-left: 2px; text-align: center; line-height: 21px; background: #eee; border: 1px solid #ccc; border-bottom: 0; box-sizing: border-box; }
  .tab.act { width: 43px; height: 21px; margin-left: 0; background: #fff; border: 0; line-height: 22px; }
  .drow { background: #f6f6f6; }
  .r1 { height: 25px; width: 520px; margin-top: 5px; padding-left: 6px; box-sizing: border-box; border-radius: 2px; }
  .r2 { height: 24px; width: 318px; margin-top: 3px; padding-left: 6px; box-sizing: border-box; }
  .r3 { height: 23px; width: 233px; margin-top: 3px; padding-left: 1px; box-sizing: border-box; }
  .on { background: #d9e8f5; border: 1px solid #1a80d8; gap: 4px; justify-content: center; height: 24px; }
  .r2 .on { height: 24px; margin-right: 5px; width: 34px !important; }
  .r3 .on { height: 23px; gap: 4px; justify-content: flex-start; padding-left: 2px; }
  .select { display: flex; justify-content: space-between; align-items: center; width: 78px; height: 24px; background: #fff; padding: 0 4px 0 2px; box-sizing: border-box; font-size: 13px; }
  .canvas { position: relative; width: 977px; height: 446px; margin-top: 3px; box-sizing: border-box; border: 2px solid #f00; background: #14181f; overflow: hidden; }
  .canvas svg { display: block; }
  .bigt { font: 12px "Liberation Mono", monospace; letter-spacing: -.6px; fill: #343a42; }
  .smt { font: 7px "Liberation Mono", monospace; font-weight: 700; fill: #62a8b8; }
  .note { font: 12px "Noto Sans CJK SC", sans-serif; }
  .input { position: absolute; left: 647px; top: 95px; width: 60px; height: 25px; background: #fff; border: 1px solid #888; box-sizing: border-box; padding: 2px 2px; font-size: 14px; line-height: 19px; }
  .input span { display: inline-block; background: #0a78d7; color: #fff; }
  .dstat { display: flex; margin: 8px 0 0 -5px; height: 22px; gap: 3px; }
  .xy { width: 98px; background: #f0f0f0; padding-left: 3px; box-sizing: border-box; border: 1px solid #e4e4e4; line-height: 20px; font-size: 11px; }
  .hint { flex: 1; position: relative; background: linear-gradient(#fbfbfb, #ececec); padding-left: 2px; line-height: 22px; }
  .grip { position: absolute; right: 2px; bottom: 2px; }

  .far { flex: 1; background: #fff; position: relative; border-top: 28px solid #f0f0f0; margin-bottom: 6px; }
  .far .chev { position: absolute; left: 4px; bottom: 7px; }

  .status { height: 20px; flex: none; display: flex; background: #f0f0f0; gap: 3px; box-sizing: border-box; }
  .c { display: block; height: 19px; line-height: 19px; border: 1px solid #dcdcdc; box-sizing: border-box; padding-left: 1px; white-space: nowrap; }
  .c.a { width: 148px; }
  .c.b { width: 77px; }
  .c.d { width: 97px; }
  .c.e { width: 47px; padding-left: 2px; }
  .c.f { width: 913px; }
  .c.g { flex: 1; margin-left: -1px; }

  .taskbar { height: 40px; flex: none; display: flex; align-items: center; background: #071a1f; color: #eee; }
  .start { width: 48px; height: 40px; background: #000; display: flex; align-items: center; justify-content: center; }
  .tsearch { width: 344px; height: 40px; background: #f0f0f0; color: #333; display: flex; align-items: center; box-sizing: border-box; padding: 0 15px 0 10px; font-size: 13px; }
  .ring { width: 14px; height: 14px; border: 3px solid #111; border-radius: 50%; }
  .ph { margin-left: 10px; flex: 1; font-family: "Noto Sans CJK SC", sans-serif; }
  .tasks { display: flex; align-items: center; height: 40px; }
  .tk { height: 40px; display: flex; align-items: center; justify-content: center; flex: none; box-sizing: border-box; }
  .ie { position: relative; }
  .ie svg { position: absolute; left: 4px; top: 5px; }
  .under { border-bottom: 2px solid #76b9ed; }
  .active { background: #2e4148; }
  .tile { width: 24px; height: 28px; border-radius: 4px; background: #0f8cf0; display: flex; align-items: center; justify-content: center; }
  .ee { font: 700 30px/30px "Liberation Sans", sans-serif; }
  .tl { width: 60px; padding-left: 20px; box-sizing: border-box; }
  .link { color: #ccc; }
  .ppl { margin-left: 6px; }
  .cpu { display: flex; flex-direction: column; align-items: center; width: 60px; margin-left: 22px; line-height: 18px; }
  .up { margin-left: 12px; }
  .tray { display: flex; align-items: center; gap: 7px; margin-left: 35px; }
  .tz { margin: 0 5px 0 4px; font-size: 13px; }
  .clock { display: flex; flex-direction: column; align-items: center; width: 64px; margin-left: 25px; line-height: 18px; font-size: 13.5px; }
  .notif { margin-left: 7px; }

  .ball { position: absolute; left: 719px; top: -26px; width: 44px; height: 40px; border-radius: 50%; background: #3fae4f; border: 1px solid #9a9a9a; box-shadow: 0 1px 3px #666; display: flex; align-items: flex-end; justify-content: center; color: #fff; font-weight: 700; font-size: 11px; line-height: 14px; padding-bottom: 4px; }
  .sogou { position: absolute; left: 765px; top: 0; display: flex; align-items: flex-start; }
  .sg { display: block; width: 24px; height: 24px; background: #f0461c; border-radius: 4px; color: #fff; font: 700 20px/24px "Liberation Sans", sans-serif; text-align: center; transform: rotate(-8deg); flex: none; position: relative; z-index: 1; }
  .sg.small { width: 14px; height: 16px; font-size: 12px; line-height: 16px; }
  .sgbar { display: flex; align-items: center; width: 178px; height: 24px; margin: 3px 0 0 1px; background: #fff; border: 1px solid #bcd0e4; box-sizing: border-box; padding-left: 6px; color: #1c74c4; }
  .zh { font: 700 15px "Noto Sans CJK SC", sans-serif; width: 22px; }
  .pt { font-weight: 700; width: 14px; font-size: 15px; }
  .rings { position: absolute; left: 0; top: 0; pointer-events: none; }
</style>
